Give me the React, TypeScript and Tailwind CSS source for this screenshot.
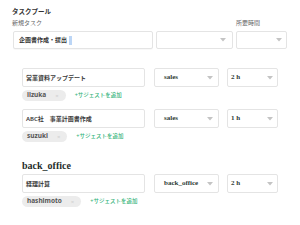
import React from "react";

const Caret = () => (
  <svg width="6" height="4" viewBox="0 0 6 4" className="shrink-0">
    <path d="M0 0 L6 0 L3 3.5 Z" fill="#c4c4c4" />
  </svg>
);

const Chip = ({ name }: { name: string }) => (
  <div className="flex items-center gap-[9px]">
    <div className="flex h-[11px] items-center rounded-full bg-[#ececec] pl-[5px] pr-[7px]">
      <span className="text-[6.5px] font-bold leading-none text-[#555]">{name}</span>
      <span className="ml-[9px] text-[6px] leading-none text-[#cfcfcf]">×</span>
    </div>
    <span className="text-[5.5px] font-medium leading-none text-[#34b37a]">+サジェストを追加</span>
  </div>
);

const TaskRow = ({
  title,
  team,
  hours,
  user,
}: {
  title: string;
  team: string;
  hours: string;
  user: string;
}) => (
  <div>
    <div className="flex h-[19px]">
      <div className="flex w-[123px] items-center rounded-[2px] border border-[#e4e4e4] bg-white pl-[3px]">
        <span className="text-[6px] font-semibold leading-none text-[#3a3a3a]">{title}</span>
      </div>
      <div className="ml-[9px] flex w-[65px] items-center justify-between rounded-[2px] border border-[#e4e4e4] bg-white pl-[9px] pr-[5px]">
        <span className="font-['Liberation_Serif'] text-[7px] font-bold leading-none text-[#2f3d38]">{team}</span>
        <Caret />
      </div>
      <div className="ml-[8px] flex w-[51px] items-center justify-between rounded-[2px] border border-[#e4e4e4] bg-white pl-[3px] pr-[4px]">
        <span className="font-['Liberation_Serif'] text-[7px] font-bold leading-none text-[#2f3d38]">{hours}</span>
        <Caret />
      </div>
    </div>
    <div className="mt-[3px]">
      <Chip name={user} />
    </div>
  </div>
);

export default function App() {
  return (
    <div className="h-[225px] w-[300px] overflow-hidden bg-white pl-[12px] pt-[7px] font-['Noto_Sans','Noto_Sans_CJK_JP',sans-serif]">
      <div className="text-[6.5px] font-bold leading-[10px] text-[#333]">タスクプール</div>
      <div className="mt-[2px] flex text-[6px] leading-[9px] text-[#666]">
        <span className="w-[224px]">新規タスク</span>
        <span>所要時間</span>
      </div>
      <div className="mt-[3px] flex h-[18px] gap-[3px]">
        <div className="ml-[1px] flex w-[140px] items-center rounded-[2px] border border-[#e4e4e4] bg-white pl-[5px] shadow-[0_1px_1px_rgba(0,0,0,0.03)]">
          <span className="text-[6px] font-bold leading-none text-[#333]">企画書作成・提出</span>
          <span className="ml-[2px] h-[9px] w-[3px] bg-[#bcd6f6]" />
        </div>
        <div className="flex w-[77px] items-center justify-end rounded-[2px] border border-[#e4e4e4] bg-white pr-[6px]">
          <Caret />
        </div>
        <div className="flex w-[51px] items-center justify-end rounded-[2px] border border-[#e4e4e4] bg-white pr-[4px]">
          <Caret />
        </div>
      </div>

      <div className="pl-[10px]">
        <div className="mt-[19px]">
          <TaskRow title="営業資料アップデート" team="sales" hours="2 h" user="iizuka" />
        </div>
        <div className="mt-[8px]">
          <TaskRow title="ABC社　事業計画書作成" team="sales" hours="1 h" user="suzuki" />
        </div>
        <div className="mt-[18px] font-['Liberation_Serif'] text-[10px] font-bold leading-[12px] text-[#1f2d2a]">
          back_office
        </div>
        <div className="mt-[2px]">
          <TaskRow title="経理計算" team="back_office" hours="2 h" user="hashimoto" />
        </div>
      </div>
    </div>
  );
}
